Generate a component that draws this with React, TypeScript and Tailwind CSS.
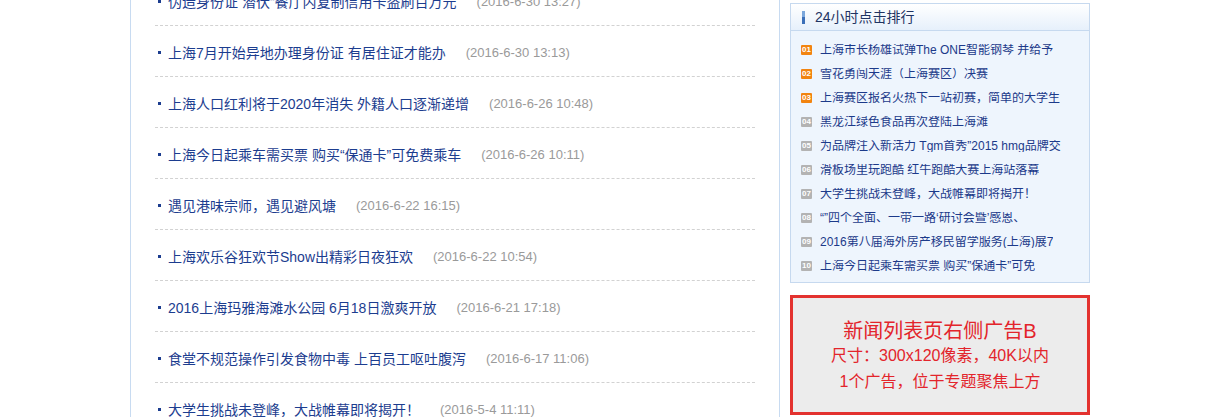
const news = [
  { title: '伪造身份证 潜伏“餐厅内复制信用卡盗刷百万元', date: '(2016-6-30 13:27)' },
  { title: '上海7月开始异地办理身份证 有居住证才能办', date: '(2016-6-30 13:13)' },
  { title: '上海人口红利将于2020年消失 外籍人口逐渐递增', date: '(2016-6-26 10:48)' },
  { title: '上海今日起乘车需买票 购买“保通卡”可免费乘车', date: '(2016-6-26 10:11)' },
  { title: '遇见港味宗师，遇见避风塘', date: '(2016-6-22 16:15)' },
  { title: '上海欢乐谷狂欢节Show出精彩日夜狂欢', date: '(2016-6-22 10:54)' },
  { title: '2016上海玛雅海滩水公园 6月18日激爽开放', date: '(2016-6-21 17:18)' },
  { title: '食堂不规范操作引发食物中毒 上百员工呕吐腹泻', date: '(2016-6-17 11:06)' },
  { title: '大学生挑战未登峰，大战帷幕即将揭开！', date: '(2016-5-4 11:11)' },
];

const ranking = [
  '上海市长杨雄试弹The ONE智能钢琴 并给予',
  '雪花勇闯天涯（上海赛区）决赛',
  '上海赛区报名火热下一站初赛，简单的大学生',
  '黑龙江绿色食品再次登陆上海滩',
  '为品牌注入新活力 Tgm首秀”2015 hmg品牌交',
  '滑板场里玩跑酷 红牛跑酷大赛上海站落幕',
  '大学生挑战未登峰，大战帷幕即将揭开！',
  '“”四个全面、一带一路‘研讨会暨’感恩、',
  '2016第八届海外房产移民留学服务(上海)展7',
  '上海今日起乘车需买票 购买”保通卡”可免',
];

const font = { fontFamily: '"Liberation Sans", "Noto Sans CJK SC", sans-serif' };

export default function App() {
  return (
    <div className="w-full h-[417px] overflow-hidden bg-white" style={font}>
      <div className="w-[960px] mx-auto flex h-full">
        {/* News list */}
        <div className="w-[650px] h-full border-x border-[#c8dbf1] px-6">
          <ul className="mt-[-25px]">
            {news.map((n) => (
              <li
                key={n.title}
                className="h-[51px] flex items-center border-b border-dashed border-[#d2d2d2] pl-[3px] pt-[3px]"
              >
                <span className="w-[3px] h-[3px] bg-[#1c3d8f] mr-[7px]" />
                <span className="text-[14px] leading-none text-[#1c3d8f] whitespace-nowrap">{n.title}</span>
                <span className="ml-5 text-[13px] leading-none text-[#9a9a9a] whitespace-nowrap">{n.date}</span>
              </li>
            ))}
          </ul>
        </div>

        {/* Right column */}
        <div className="w-[300px] ml-[10px]">
          <div className="mt-[3px] border border-[#c6d9ef] bg-[#eef5fd]">
            <div className="h-[27px] flex items-center border-b border-[#c6d9ef] bg-gradient-to-b from-white to-[#e6f0fb]">
              <span className="ml-[11px] w-[3px] h-[13px] flex flex-col">
                <span className="flex-1 bg-[#7aa7dc]" />
                <span className="flex-1 bg-[#3b6fb8]" />
              </span>
              <span className="ml-[10px] text-[14px] leading-none text-[#1f3463]">24小时点击排行</span>
            </div>
            <ul className="pt-[7px] pb-[4px] pl-[10px] pr-[12px]">
              {ranking.map((r, i) => (
                <li key={i} className="h-[24px] flex items-center">
                  <span
                    className={`w-[11px] h-[10px] rounded-[1px] flex items-center justify-center text-[8px] leading-none font-bold text-white shrink-0 ${
                      i < 3 ? 'bg-[#f28410]' : 'bg-[#b3b3b3]'
                    }`}
                  >
                    {String(i + 1).padStart(2, '0')}
                  </span>
                  <span className="ml-[8px] text-[12px] leading-none text-[#1c3a8a] whitespace-nowrap overflow-hidden">{r}</span>
                </li>
              ))}
            </ul>
          </div>

          {/* Ad placeholder */}
          <div className="mt-[12px] h-[120px] border-[3px] border-[#e3322f] bg-[#ececec] flex flex-col items-center justify-center pt-[4px] text-[#e3242b]">
            <div className="text-[20px] leading-[24px]">新闻列表页右侧广告B</div>
            <div className="text-[16px] leading-[25px]">尺寸：300x120像素，40K以内</div>
            <div className="text-[16px] leading-[27px]">1个广告，位于专题聚焦上方</div>
          </div>
        </div>
      </div>
    </div>
  );
}
